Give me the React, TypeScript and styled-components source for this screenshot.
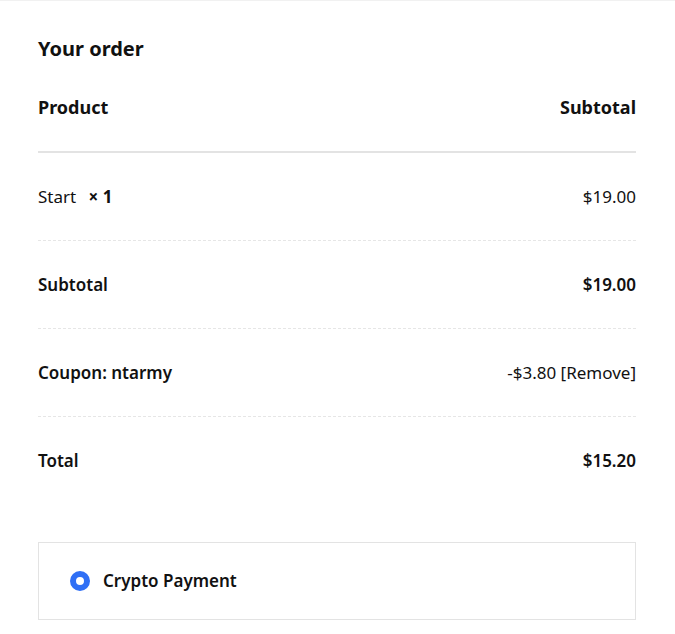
import React from 'react';
import styled, { createGlobalStyle } from 'styled-components';

const GlobalStyle = createGlobalStyle`
  html, body {
    margin: 0;
    padding: 0;
    background: #ffffff;
  }
  body {
    font-family: "Noto Sans", "Open Sans", Arial, sans-serif;
    color: #111111;
  }
`;

const Wrapper = styled.div`
  border-top: 1px solid #f1f1f1;
  padding: 35px 39px 14px 38px;
`;

const Title = styled.h3`
  margin: 0;
  font-size: 20px;
  line-height: 26px;
  font-weight: 700;
`;

const Table = styled.div`
  margin-top: 21px;
  display: flex;
  flex-direction: column;
`;

const HeadRow = styled.div`
  display: flex;
  justify-content: space-between;
  padding: 12px 0 32px;
  border-bottom: 2px solid #e3e3e3;
  font-size: 18px;
  line-height: 24px;
  font-weight: 700;
`;

const Row = styled.div<{ $last?: boolean }>`
  display: flex;
  justify-content: space-between;
  align-items: center;
  padding: 32px 0 31px;
  border-bottom: ${(p) => (p.$last ? 'none' : '1px dashed #e6e6e6')};
  font-size: 17px;
  line-height: 24px;
`;

const Label = styled.span<{ $bold?: boolean }>`
  font-weight: ${(p) => (p.$bold ? 600 : 400)};
`;

const Qty = styled.strong`
  margin-left: 8px;
  font-weight: 700;
`;

const PaymentBox = styled.div`
  margin-top: 38px;
  border: 1px solid #e3e3e3;
  height: 76px;
  display: flex;
  align-items: center;
  padding-left: 31px;
  gap: 13px;
`;

const Radio = styled.span`
  width: 20px;
  height: 20px;
  box-sizing: border-box;
  border-radius: 50%;
  border: 6px solid #2f6ff5;
  background: #ffffff;
  flex-shrink: 0;
`;

const PaymentLabel = styled.span`
  font-size: 17px;
  line-height: 24px;
  font-weight: 600;
`;

export default function App() {
  return (
    <>
      <GlobalStyle />
      <Wrapper>
        <Title>Your order</Title>
        <Table>
          <HeadRow>
            <span>Product</span>
            <span>Subtotal</span>
          </HeadRow>
          <Row>
            <span>
              Start <Qty>× 1</Qty>
            </span>
            <span>$19.00</span>
          </Row>
          <Row>
            <Label $bold>Subtotal</Label>
            <Label $bold>$19.00</Label>
          </Row>
          <Row>
            <Label $bold>Coupon: ntarmy</Label>
            <span>-$3.80 [Remove]</span>
          </Row>
          <Row $last>
            <Label $bold>Total</Label>
            <Label $bold>$15.20</Label>
          </Row>
        </Table>
        <PaymentBox>
          <Radio />
          <PaymentLabel>Crypto Payment</PaymentLabel>
        </PaymentBox>
      </Wrapper>
    </>
  );
}
